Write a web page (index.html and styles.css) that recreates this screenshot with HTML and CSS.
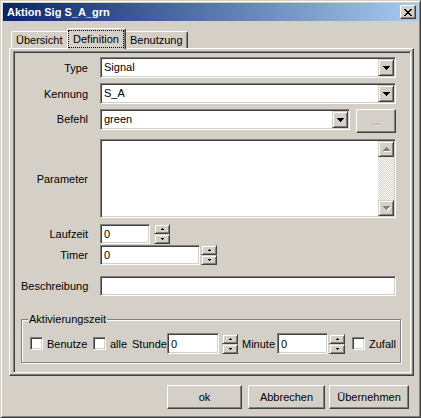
FILE: index.html
```html
<!DOCTYPE html>
<html lang="de">
<head>
<meta charset="utf-8">
<title>Aktion Sig S_A_grn</title>
<link rel="stylesheet" href="styles.css">
</head>
<body>
<div class="window">
  <div class="titlebar">
    <span class="title">Aktion Sig S_A_grn</span>
    <button class="close-btn" aria-label="Schließen">
      <svg width="8" height="7" viewBox="0 0 8 7" shape-rendering="crispEdges"><path fill="#000" d="M0 0h2v1H0zM6 0h2v1H6zM1 1h2v1H1zM5 1h2v1H5zM2 2h4v1H2zM3 3h2v1H3zM2 4h4v1H2zM1 5h2v1H1zM5 5h2v1H5zM0 6h2v1H0zM6 6h2v1H6z"/></svg>
    </button>
  </div>
  <div class="dialog-body">
    <div class="tabs">
      <div class="tab tab-uebersicht">Übersicht</div>
      <div class="tab tab-active tab-definition"><span class="focus">Definition</span></div>
      <div class="tab tab-benutzung">Benutzung</div>
    </div>
    <div class="tab-panel">
      <div class="frame">
        <div class="row row-type">
          <span class="lbl">Type</span>
          <div class="combo"><span class="combo-text">Signal</span><span class="dd-btn"><svg width="7" height="4" viewBox="0 0 7 4" shape-rendering="crispEdges"><path fill="#000" d="M0 0h7v1H0zM1 1h5v1H1zM2 2h3v1H2zM3 3h1v1H3z"/></svg></span></div>
        </div>
        <div class="row row-kennung">
          <span class="lbl">Kennung</span>
          <div class="combo"><span class="combo-text">S_A</span><span class="dd-btn"><svg width="7" height="4" viewBox="0 0 7 4" shape-rendering="crispEdges"><path fill="#000" d="M0 0h7v1H0zM1 1h5v1H1zM2 2h3v1H2zM3 3h1v1H3z"/></svg></span></div>
        </div>
        <div class="row row-befehl">
          <span class="lbl">Befehl</span>
          <div class="befehl-field">
            <div class="combo combo-befehl"><span class="combo-text">green</span><span class="dd-btn"><svg width="7" height="4" viewBox="0 0 7 4" shape-rendering="crispEdges"><path fill="#000" d="M0 0h7v1H0zM1 1h5v1H1zM2 2h3v1H2zM3 3h1v1H3z"/></svg></span></div>
            <button class="btn btn-dots" disabled>...</button>
          </div>
        </div>
        <div class="row row-param">
          <span class="lbl">Parameter</span>
          <div class="memo">
            <div class="memo-text"></div>
            <div class="vscroll">
              <span class="sb-btn"><svg width="8" height="5" viewBox="0 0 8 5" shape-rendering="crispEdges"><path fill="#fff" d="M4 1h1v1H4zM3 2h3v1H3zM2 3h5v1H2zM1 4h7v1H1z"/><path fill="#808080" d="M3 0h1v1H3zM2 1h3v1H2zM1 2h5v1H1zM0 3h7v1H0z"/></svg></span>
              <span class="sb-track"></span>
              <span class="sb-btn"><svg width="8" height="5" viewBox="0 0 8 5" shape-rendering="crispEdges"><path fill="#fff" d="M1 1h7v1H1zM2 2h5v1H2zM3 3h3v1H3zM4 4h1v1H4z"/><path fill="#808080" d="M0 0h7v1H0zM1 1h5v1H1zM2 2h3v1H2zM3 3h1v1H3z"/></svg></span>
            </div>
          </div>
        </div>
        <div class="row row-laufzeit">
          <span class="lbl">Laufzeit</span>
          <div class="spin-field">
            <input class="edit edit-laufzeit" type="text" value="0">
            <div class="spin spin-laufzeit">
              <span class="spin-btn"><svg width="3" height="2" viewBox="0 0 3 2" shape-rendering="crispEdges"><path fill="#000" d="M1 0h1v1H1zM0 1h3v1H0z"/></svg></span>
              <span class="spin-btn"><svg width="3" height="2" viewBox="0 0 3 2" shape-rendering="crispEdges"><path fill="#000" d="M0 0h3v1H0zM1 1h1v1H1z"/></svg></span>
            </div>
          </div>
        </div>
        <div class="row row-timer">
          <span class="lbl">Timer</span>
          <div class="spin-field">
            <input class="edit edit-timer" type="text" value="0">
            <div class="spin spin-timer">
              <span class="spin-btn"><svg width="3" height="2" viewBox="0 0 3 2" shape-rendering="crispEdges"><path fill="#000" d="M1 0h1v1H1zM0 1h3v1H0z"/></svg></span>
              <span class="spin-btn"><svg width="3" height="2" viewBox="0 0 3 2" shape-rendering="crispEdges"><path fill="#000" d="M0 0h3v1H0zM1 1h1v1H1z"/></svg></span>
            </div>
          </div>
        </div>
        <div class="row row-beschreibung">
          <span class="lbl">Beschreibung</span>
          <input class="edit edit-wide" type="text" value="">
        </div>
        <fieldset class="group">
          <legend class="group-title">Aktivierungszeit</legend>
          <div class="group-row">
            <input class="check" type="checkbox">
            <span class="cb-label cb-benutze">Benutze</span>
            <input class="check" type="checkbox">
            <span class="cb-label cb-alle">alle</span>
            <span class="g-label g-stunde">Stunde</span>
            <input class="edit edit-stunde" type="text" value="0">
            <div class="spin spin-stunde">
              <span class="spin-btn"><svg width="3" height="2" viewBox="0 0 3 2" shape-rendering="crispEdges"><path fill="#000" d="M1 0h1v1H1zM0 1h3v1H0z"/></svg></span>
              <span class="spin-btn"><svg width="3" height="2" viewBox="0 0 3 2" shape-rendering="crispEdges"><path fill="#000" d="M0 0h3v1H0zM1 1h1v1H1z"/></svg></span>
            </div>
            <span class="g-label g-minute">Minute</span>
            <input class="edit edit-minute" type="text" value="0">
            <div class="spin spin-minute">
              <span class="spin-btn"><svg width="3" height="2" viewBox="0 0 3 2" shape-rendering="crispEdges"><path fill="#000" d="M1 0h1v1H1zM0 1h3v1H0z"/></svg></span>
              <span class="spin-btn"><svg width="3" height="2" viewBox="0 0 3 2" shape-rendering="crispEdges"><path fill="#000" d="M0 0h3v1H0zM1 1h1v1H1z"/></svg></span>
            </div>
            <input class="check check-zufall" type="checkbox">
            <span class="cb-label cb-zufall">Zufall</span>
          </div>
        </fieldset>
      </div>
    </div>
    <div class="buttons">
      <button class="btn btn-ok">ok</button>
      <button class="btn btn-abbrechen">Abbrechen</button>
      <button class="btn btn-uebernehmen">Übernehmen</button>
    </div>
  </div>
</div>
</body>
</html>
```

FILE: styles.css
```css
* { box-sizing: border-box; }
html, body { margin: 0; padding: 0; background: #d4d0c8; }
body { font: 11px "Liberation Sans", Arial, sans-serif; color: #000; }

.window {
  width: 421px; height: 418px;
  padding: 2px;
  background: #d4d0c8;
  border: 1px solid; border-color: #d4d0c8 #404040 #404040 #d4d0c8;
  box-shadow: inset 1px 1px #fff, inset -1px -1px #808080;
  display: flex; flex-direction: column;
}

.titlebar {
  height: 18px; flex: none;
  display: flex; align-items: center; justify-content: space-between;
  padding: 0 2px 0 4px;
  background: linear-gradient(to right, #0a246a, #a6caf0);
  color: #fff; font-weight: bold; font-size: 11px;
}
.title { line-height: 14px; }
.close-btn {
  width: 16px; height: 14px; padding: 0; margin: 0;
  display: flex; align-items: center; justify-content: center;
  background: #d4d0c8;
  border: 1px solid; border-color: #fff #404040 #404040 #fff;
  box-shadow: inset -1px -1px #808080;
}
.close-btn svg { display: block; margin-left: -1px; }

.dialog-body { flex: 1; display: flex; flex-direction: column; padding: 0 4px 0 6px; }

.tabs {
  height: 20px; margin-top: 7px; flex: none;
  display: flex; align-items: flex-end; padding-left: 2px;
}
.tab {
  height: 17px; padding: 2px 0 0 4px; line-height: 13px;
  border-top: 1px solid #fff; border-left: 1px solid #fff; border-right: 1px solid #404040;
  border-radius: 2px 2px 0 0;
  box-shadow: inset -1px 0 #808080;
  white-space: nowrap;
}
.tab-uebersicht { width: 58px; }
.tab-definition { width: 55px; }
.tab-benutzung { width: 64px; padding-left: 5px; }
.tab-active {
  width: 59px; height: 21px; margin: 0 -2px -1px;
  padding: 1px 1px 0 0;
  background: #d4d0c8;
  position: relative; z-index: 1;
}
.focus {
  display: block; height: 18px; line-height: 16px; text-align: center;
  border: 1px dotted #000;
}

.tab-panel {
  height: 328px; flex: none;
  display: flex; flex-direction: column;
  border: 1px solid; border-color: #fff #404040 #404040 #fff;
  box-shadow: inset -1px -1px #808080;
  padding: 2px 2px 2px 3px;
}

.frame {
  flex: 1;
  border: 1px solid; border-color: #808080 #fff #fff #808080;
  box-shadow: inset 1px 1px #404040, inset -1px -1px #d4d0c8;
  padding: 5px 9px 0 7px;
  display: flex; flex-direction: column;
}

.row {
  display: grid; grid-template-columns: 67px 1fr; column-gap: 12px;
  align-items: center; margin-right: 5px;
}
.lbl { text-align: right; white-space: nowrap; }
.row-kennung { margin-top: 5px; }
.row-befehl { margin-top: 5px; align-items: start; }
.row-befehl .lbl { line-height: 21px; }
.row-param { margin-top: 6px; }
.row-laufzeit { margin-top: 6px; }
.row-timer { margin-top: 1px; }
.row-beschreibung { margin-top: 11px; }

.combo {
  height: 21px; padding: 1px;
  display: flex; align-items: stretch;
  background: #fff;
  border: 1px solid; border-color: #808080 #fff #fff #808080;
  box-shadow: inset 1px 1px #404040, inset -1px -1px #d4d0c8;
}
.combo-text { flex: 1; padding-left: 2px; line-height: 17px; }
.dd-btn {
  width: 16px; flex: none;
  display: flex; align-items: center; justify-content: center;
  background: #d4d0c8;
  border: 1px solid; border-color: #d4d0c8 #404040 #404040 #d4d0c8;
  box-shadow: inset 1px 1px #fff, inset -1px -1px #808080;
}
.dd-btn svg { display: block; }

.befehl-field { display: flex; gap: 6px; }
.combo-befehl { width: 250px; }

.btn {
  font: inherit; color: #000; margin: 0; padding: 0;
  background: #d4d0c8;
  border: 1px solid; border-color: #fff #404040 #404040 #fff;
  box-shadow: inset -1px -1px #808080;
  height: 24px;
}
.btn-dots { width: 40px; color: #808080; text-shadow: 1px 1px #fff; letter-spacing: 0; }

.memo {
  height: 79px; padding: 1px;
  display: flex;
  background: #fff;
  border: 1px solid; border-color: #808080 #fff #fff #808080;
  box-shadow: inset 1px 1px #404040, inset -1px -1px #d4d0c8;
}
.memo-text { flex: 1; }
.vscroll { width: 16px; display: flex; flex-direction: column; }
.sb-btn {
  height: 16px; flex: none;
  display: flex; align-items: center; justify-content: center;
  background: #d4d0c8;
  border: 1px solid; border-color: #d4d0c8 #404040 #404040 #d4d0c8;
  box-shadow: inset 1px 1px #fff, inset -1px -1px #808080;
}
.sb-btn svg { display: block; margin-left: 1px; }
.sb-track {
  flex: 1;
  background: repeating-conic-gradient(#fff 0 25%, #d4d0c8 0 50%) 0 0 / 2px 2px;
}

.edit {
  height: 20px; margin: 0; padding: 0 0 0 3px;
  font: inherit; color: #000;
  background: #fff; outline: none;
  border: 1px solid; border-color: #808080 #fff #fff #808080;
  box-shadow: inset 1px 1px #404040, inset -1px -1px #d4d0c8;
  appearance: none;
}
.spin-field { display: flex; align-items: flex-start; }
.edit-laufzeit { width: 50px; }
.edit-timer { width: 100px; }
.edit-wide { width: 100%; }
.spin { display: flex; flex-direction: column; flex: none; }
.spin-laufzeit { margin-left: 4px; }
.spin-timer { margin-left: 1px; }
.spin-btn {
  width: 16px; height: 10px;
  display: flex; align-items: center; justify-content: center;
  background: #d4d0c8;
  border: 1px solid; border-color: #d4d0c8 #404040 #404040 #d4d0c8;
  box-shadow: inset 1px 1px #fff, inset -1px -1px #808080;
}
.spin-btn svg { display: block; }

.group {
  margin: 17px 0 0; min-width: 0;
  padding: 7px 0 8px 8px;
  border: 1px solid #808080;
  box-shadow: inset 1px 1px #fff, 1px 1px #fff;
}
.group-title {
  padding: 0 1px; margin-left: -2px;
  line-height: 13px;
  background: #d4d0c8;
}
.group-row { display: flex; align-items: center; height: 21px; }
.check {
  width: 13px; height: 13px; margin: 0; flex: none;
  appearance: none; background: #fff;
  border: 1px solid; border-color: #808080 #fff #fff #808080;
  box-shadow: inset 1px 1px #404040, inset -1px -1px #d4d0c8;
}
.cb-label, .g-label { white-space: nowrap; flex: none; }
.cb-label { margin-left: 4px; }
.cb-benutze { width: 39px; margin-right: 7px; }
.cb-alle { width: 16px; margin-right: 6px; }
.g-stunde { width: 35px; }
.edit-stunde { width: 52px; height: 21px; flex: none; }
.spin-stunde { margin-left: 3px; }
.g-minute { width: 33px; margin-left: 4px; }
.edit-minute { width: 51px; height: 21px; margin-left: 2px; flex: none; }
.spin-minute { margin-left: 1px; }
.check-zufall { margin-left: 7px; }

.buttons {
  margin-top: 9px; margin-right: 5px;
  display: flex; justify-content: flex-end;
}
.btn-ok { width: 75px; }
.btn-abbrechen { width: 77px; margin-left: 6px; }
.btn-uebernehmen { width: 80px; margin-left: 4px; }
```
